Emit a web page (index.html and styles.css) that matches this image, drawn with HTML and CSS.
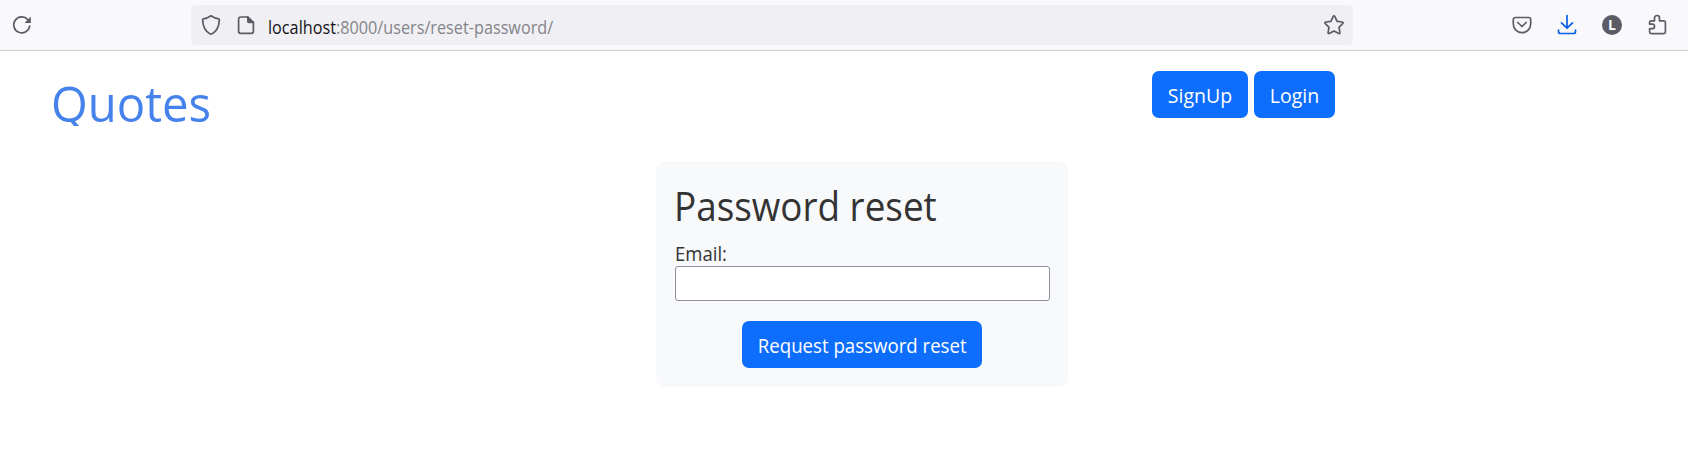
FILE: index.html
```html
<!DOCTYPE html>
<html lang="en">
<head>
<meta charset="utf-8">
<title>Password reset</title>
<link rel="stylesheet" href="styles.css">
</head>
<body>
<div class="toolbar">
  <svg class="icon reload" width="22" height="22" viewBox="0 0 22 22"><path d="M18.7 12A8 8 0 1 1 16.8 5.6" /><path class="solid" d="M19.8 2.4v6.5h-6.2z"/></svg>
  <div class="urlbar">
    <svg class="icon shield" width="20" height="22" viewBox="0 0 20 22"><path d="M10 1.8C7.6 3.5 5 4.5 2.3 4.9 1.5 5 1.6 5.8 1.7 6.6c.4 6.4 2.9 11 7.2 13.2q1.1.6 2.2 0c4.3-2.2 6.8-6.800 7.200-13.200.1-.8.2-1.600-.600-1.700C15 4.500 12.400 3.500 10 1.800z"/></svg>
    <svg class="icon page" width="18" height="20" viewBox="0 0 18 20"><path d="M10.500 2H3.600a2 2 0 0 0-2 2v12.300a2 2 0 0 0 2 2h10.800a2 2 0 0 0 2-2V7.300"/><path class="solid" d="M10 1.200h1.300L17.200 7v1.200h-5.400Q10 8.200 10 6.400z"/></svg>
    <div class="address"><span class="host">localhost</span><span class="path">:8000/users/reset-password/</span></div>
    <svg class="icon star" width="22" height="22" viewBox="0 0 22 22"><path d="M10.100 2.600q.9-1.700 1.800 0L14.100 7.300l5 .7q1.900.3.500 1.700L16 13.300l.9 5q.2 1.900-1.500 1L11 16.900l-4.400 2.400q-1.700.9-1.500-1l.9-5L2.400 9.700Q1 8.300 2.900 8l5-.7z"/></svg>
  </div>
  <div class="actions">
    <svg class="icon" width="20" height="22" viewBox="0 0 20 22"><path d="M3.300 3.500h13.400a2 2 0 0 1 2 2v4.500a8.700 8.700 0 0 1-17.400 0V5.500a2 2 0 0 1 2-2z"/><path d="m5.800 8.500 4.200 4 4.200-4"/></svg>
    <svg class="icon download" width="20" height="22" viewBox="0 0 20 22"><path d="M10 1.500v12.500M4.500 8.800l5.500 5.400 5.500-5.400M1.500 16v1.500a2 2 0 0 0 2 2h13a2 2 0 0 0 2-2V16"/></svg>
    <span class="avatar">L</span>
    <svg class="icon" width="20" height="22" viewBox="0 0 20 22"><path d="M4.200 6.800H7.500V4a2.500 2.500 0 0 1 5 0v2.800h4.300a1.600 1.600 0 0 1 1.600 1.600v9.700a1.600 1.600 0 0 1-1.600 1.600H4.200a1.600 1.600 0 0 1-1.600-1.600v-3.400h2.600a2.300 2.300 0 0 0 0-4.600H2.600V8.400a1.600 1.600 0 0 1 1.600-1.600z"/></svg>
  </div>
</div>
<header class="header">
  <a class="brand">Quotes</a>
  <nav class="nav"><a class="btn signup">SignUp</a><a class="btn login">Login</a></nav>
</header>
<main class="card">
  <h1 class="title">Password reset</h1>
  <label class="label" for="email">Email:</label>
  <input class="field" id="email" type="email">
  <button class="btn submit" type="button"><span class="submit-text">Request password reset</span></button>
</main>
</body>
</html>
```
FILE: styles.css
```css
* { box-sizing: border-box; }
body {
  margin: 0;
  height: 476px;
  overflow: hidden;
  background: #fff;
  color: #333;
  font-family: "Open Sans", "Noto Sans", sans-serif;
  font-size: 19.5px;
}
.toolbar {
  display: flex;
  align-items: center;
  height: 51px;
  padding-left: 11px;
  background: #f9f9fb;
  border-bottom: 1px solid #ccc;
}
.icon {
  flex: none;
  fill: none;
  stroke: #5b5b66;
  stroke-width: 1.7;
  stroke-linecap: round;
  stroke-linejoin: round;
}
.icon .solid { fill: #5b5b66; stroke: none; }
.urlbar {
  display: flex;
  align-items: center;
  width: 1162px;
  height: 40px;
  margin-left: 158px;
  padding: 0 8px 0 10px;
  border-radius: 5px;
  background: #f0f0f4;
}
.page { margin-left: 16px; }
.address {
  flex: 1;
  margin-left: 13px;
  padding-top: 3px;
  font-size: 17.5px;
  line-height: 24px;
  white-space: nowrap;
  transform: scaleX(0.927);
  transform-origin: left;
}
.host { color: #15141a; }
.path { color: #84848b; }
.actions { display: flex; align-items: center; gap: 25px; margin-left: 159px; }
.download { stroke: #0561e2; }
.avatar {
  width: 20px;
  height: 20px;
  border-radius: 50%;
  background: #5b5b66;
  color: #fff;
  font: bold 14px/20px "Open Sans", sans-serif;
  text-align: center;
}
.header {
  display: flex;
  justify-content: space-between;
  align-items: flex-start;
  width: 1335px;
  height: 110px;
  padding: 20px 0 0 51px;
}
.brand {
  height: 55px;
  overflow: hidden;
  color: #4682eb;
  font-size: 49.5px;
  line-height: 65px;
  transform: scaleX(0.955);
  transform-origin: left;
}
.nav { display: flex; gap: 6px; }
.btn {
  height: 47px;
  padding: 2px 0 0;
  border: 0;
  border-radius: 7px;
  background: #0d6efd;
  color: #fff;
  font: 19.5px/45px "Open Sans", "Noto Sans", sans-serif;
  text-align: center;
  white-space: nowrap;
}
.signup { width: 96px; }
.login { width: 81px; }
.card {
  display: flex;
  flex-direction: column;
  width: 412px;
  height: 226px;
  margin-left: 656px;
  padding: 19px 18px 0 19px;
  border-radius: 9px;
  background: #f8f9fb;
}
.title {
  margin: 0 0 0 -1px;
  font-size: 40px;
  font-weight: 400;
  line-height: 52px;
  white-space: nowrap;
  transform: scaleX(0.921);
  transform-origin: left;
}
.label {
  margin-top: 9px;
  line-height: 25px;
  transform: scaleX(0.95);
  transform-origin: left;
}
.field {
  width: 375px;
  height: 35px;
  border: 1px solid #8f8f9d;
  border-radius: 3px;
  background: #fff;
}
.submit { width: 240px; margin: 20px 0 0 67px; }
.submit-text { display: inline-block; transform: scaleX(0.956); }
```
